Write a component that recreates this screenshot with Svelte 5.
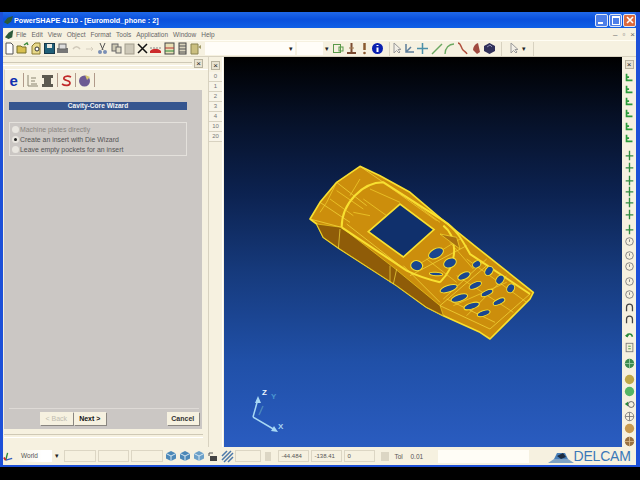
<script>
  const menus = ["File", "Edit", "View", "Object", "Format", "Tools", "Application", "Window", "Help"];
  const layers = ["0", "1", "2", "3", "4", "10", "20"];
  const toolsA = ["page", "open", "find", "save", "print", "undo", "redo", "cut", "copy", "paste", "x", "red", "grid", "list", "note"];
  const toolsB = ["frame", "anchor", "bang", "info"];
  const toolsC = ["arrow", "axes", "plus", "line", "arc", "curve", "solid", "cube"];
  const side = [
    ["corner", 0], ["corner", 0], ["corner", 0], ["corner", 0], ["corner", 2], ["corner", 0],
    ["cross", 5], ["cross", 0], ["cross", 1], ["cross", 0], ["cross", -1], ["cross", 0], ["cross", 3], ["circle", 1],
    ["circle", 2], ["circle", -1],
    ["circle", 3], ["circle", 2], ["cup", 1], ["cup", 0],
    ["back", 4], ["sheet", 1],
    ["globe", 4], ["gold", 4], ["lime", 0], ["hand", 1], ["wire", 1], ["copper", 0], ["bronze", 1]
  ];
  const keys = [
    [408, 283, 24, 14, -28], [350, 320, 18, 15, 10], [450, 312, 20, 14, -25], [408, 345, 20, 5, 5],
    [530, 316, 13, 10, -30], [567, 336, 15, 11, -55], [600, 362, 15, 11, -55], [632, 388, 14, 11, -60],
    [492, 351, 20, 10, -25], [526, 379, 20, 9, -25], [561, 402, 19, 8, -25], [597, 428, 19, 8, -25],
    [446, 389, 27, 10, -18], [478, 417, 26, 10, -18], [515, 441, 24, 9, -18], [551, 463, 20, 8, -18]
  ];
</script>

{#snippet icon(name)}
  <svg class="ico" viewBox="0 0 13 13">
    {#if name === "page"}
      <path d="M3 1h5l2 2v9H3z" fill="#fff" stroke="#555" />
    {:else if name === "open"}
      <path d="M1 11V4h4l1 1h4v6z" fill="#d8c050" stroke="#77702a" /><path d="M8 3l3-2 1 2" fill="none" stroke="#3a8a3a" stroke-width="1.5" />
    {:else if name === "find"}
      <path d="M2 12V4l3-3h5v11z" fill="#e8d98a" stroke="#8a7a30" /><circle cx="7" cy="7" r="2" fill="#fff" stroke="#333" />
    {:else if name === "save"}
      <rect x="1.5" y="1.5" width="10" height="10" fill="#1f5f78" stroke="#16384a" /><rect x="4" y="2" width="5" height="4" fill="#e8e8e0" />
    {:else if name === "print"}
      <rect x="1" y="6" width="11" height="5" fill="#777" /><rect x="3" y="2" width="7" height="5" fill="#ddd" stroke="#666" />
    {:else if name === "undo"}
      <path d="M3 7c2-3 5-3 7 0" fill="none" stroke="#cfc8b8" stroke-width="1.5" />
    {:else if name === "redo"}
      <path d="M3 7h7M8 5l2 2-2 2" fill="none" stroke="#d5cebe" />
    {:else if name === "cut"}
      <path d="M4 1l3 7M9 1L6 8" stroke="#555" fill="none" /><circle cx="4" cy="10" r="2" fill="#7a8fb5" /><circle cx="9" cy="10" r="2" fill="#7a8fb5" />
    {:else if name === "copy"}
      <rect x="2" y="2" width="6" height="7" fill="#cfcab5" stroke="#666" /><rect x="6" y="5" width="5" height="6" fill="#e4dfca" stroke="#666" />
    {:else if name === "paste"}
      <rect x="2" y="2" width="9" height="10" fill="#cdc8b8" stroke="#a29d8c" />
    {:else if name === "x"}
      <path d="M2 2l9 9M11 2l-9 9" stroke="#111" stroke-width="1.5" />
    {:else if name === "red"}
      <path d="M1 9c3-3 8-3 11 0v2H1z" fill="#cc2c2c" /><path d="M1 6h11" stroke="#888" stroke-dasharray="2 1" />
    {:else if name === "grid"}
      <rect x="2" y="1" width="9" height="11" fill="#e8dfb5" stroke="#444" /><path d="M2 6h9" stroke="#b33" /><path d="M2 9h9" stroke="#2a8a3a" />
    {:else if name === "list"}
      <rect x="3" y="1" width="7" height="11" fill="#d8d2bc" stroke="#444" /><path d="M3 4h7M3 7h7M3 10h7" stroke="#555" />
    {:else if name === "note"}
      <path d="M2 2h7v10H2z" fill="#cbbf80" stroke="#8a8350" /><path d="M9 5l3-2v4z" fill="#a09a68" />
    {:else if name === "frame"}
      <rect x="1.5" y="2.5" width="7" height="8" fill="none" stroke="#5a9a4a" /><rect x="7" y="5" width="4" height="4" fill="none" stroke="#5a9a4a" />
    {:else if name === "anchor"}
      <path d="M6.5 1v9M2 11h9" stroke="#7a4a30" stroke-width="2" fill="none" /><path d="M4 6h5" stroke="#a07a50" />
    {:else if name === "bang"}
      <path d="M6.5 1v7" stroke="#8a5a30" stroke-width="2.5" /><circle cx="6.5" cy="11" r="1.3" fill="#8a5a30" />
    {:else if name === "info"}
      <circle cx="6.5" cy="6.5" r="5.5" fill="#0a20b0" /><path d="M6.5 3v1M6.5 5.5V10" stroke="#fff" stroke-width="2" />
    {:else if name === "arrow"}
      <path d="M4 1v10l2.5-2.5L9 11l1-1-2-2.5h3z" fill="#f2efe6" stroke="#9a9a9a" />
    {:else if name === "axes"}
      <path d="M3 2v8h8M3 10l5-5" stroke="#5c7c98" stroke-width="1.5" fill="none" />
    {:else if name === "plus"}
      <path d="M6.5 1v11M1 6.5h11" stroke="#4a90a8" stroke-width="1.5" />
    {:else if name === "line"}
      <path d="M2 12L12 2" stroke="#6aa860" stroke-width="1.5" />
    {:else if name === "arc"}
      <path d="M2 12C2 6 6 2 11 2" stroke="#6aa860" stroke-width="1.3" fill="none" />
    {:else if name === "curve"}
      <path d="M2 1c3 0 3 5 5 7s3 2 4 4" stroke="#b0503c" stroke-width="1.5" fill="none" />
    {:else if name === "solid"}
      <path d="M3 8c0-3 2-6 5-7l2 9-3 2z" fill="#a04a40" />
    {:else if name === "cube"}
      <path d="M6.5 1L12 4v5l-5.5 3L1 9V4z" fill="#30305a" /><path d="M4 5l3-2 2 2" stroke="#8a8ab0" fill="none" />
    {:else if name === "corner"}
      <path d="M3 2v8h7M3 6h3" stroke="#2a9a3a" stroke-width="2" fill="none" />
    {:else if name === "cross"}
      <path d="M6.5 1v11M2 7h9" stroke="#2f8a40" stroke-width="1.6" />
    {:else if name === "circle"}
      <circle cx="6.5" cy="6.5" r="4.5" fill="none" stroke="#777" /><path d="M6.5 4v3" stroke="#777" />
    {:else if name === "cup"}
      <path d="M3 11V6a3.5 3.5 0 0 1 7 0v5" fill="none" stroke="#444" stroke-width="1.5" />
    {:else if name === "back"}
      <path d="M3 8c0-4 6-5 7 0" fill="none" stroke="#2a8a3a" stroke-width="1.8" /><path d="M1 6l3 3 2-3z" fill="#2a8a3a" />
    {:else if name === "sheet"}
      <rect x="2.5" y="1.5" width="8" height="10" fill="#f2efd8" stroke="#777" /><path d="M5 5h3M5 8h3" stroke="#3a8a3a" />
    {:else if name === "globe"}
      <circle cx="6.5" cy="6.5" r="5.5" fill="#3c8a50" /><path d="M1 6.5h11M6.5 1v11" stroke="#a0d0a8" />
    {:else if name === "gold"}
      <circle cx="6.5" cy="6.5" r="5.5" fill="#c0a848" />
    {:else if name === "lime"}
      <circle cx="6.5" cy="6.5" r="5.5" fill="#55b565" />
    {:else if name === "hand"}
      <path d="M1 6l4-3v6z" fill="#2a8a3a" /><circle cx="8.5" cy="6.5" r="3.5" fill="#f4f0e0" stroke="#555" />
    {:else if name === "wire"}
      <circle cx="6.5" cy="6.5" r="5" fill="none" stroke="#777" /><path d="M1.5 6.5h10M6.5 1.5v10" stroke="#777" />
    {:else if name === "copper"}
      <circle cx="6.5" cy="6.5" r="5.5" fill="#c89a50" />
    {:else if name === "bronze"}
      <circle cx="6.5" cy="6.5" r="5.5" fill="#987040" /><path d="M1 6.5h11M6.5 1v11" stroke="#d8b888" />
    {/if}
  </svg>
{/snippet}

<div class="window">
  <div class="title">
    <svg class="logo" viewBox="0 0 12 12"><path d="M1 8l4-5 6-2-2 6-4 3z" fill="#2c5a3a" /></svg>
    <span class="caption">PowerSHAPE 4110 - [Euromold_phone : 2]</span>
    <div class="caps">
      <span class="cap"><i class="min"></i></span>
      <span class="cap"><i class="max"></i></span>
      <span class="cap close"><svg viewBox="0 0 10 10"><path d="M2 2l6 6M8 2l-6 6" stroke="#fff" stroke-width="1.6" /></svg></span>
    </div>
  </div>

  <div class="menu">
    <svg class="logo" viewBox="0 0 12 12"><path d="M1 9l4-5 5-3-1 8-4 2z" fill="#2c5a3a" /></svg>
    {#each menus as m}<span>{m}</span>{/each}
    <div class="mdi">
      <span>–</span><span>▫</span><span>×</span>
    </div>
  </div>

  <div class="toolbar">
    <div class="tools">
      {#each toolsA as t}<span class="tool">{@render icon(t)}</span>{/each}
    </div>
    <div class="combo wide"><span class="drop">▾</span></div>
    <div class="combo small"></div>
    <span class="drop">▾</span>
    <div class="tools">
      {#each toolsB as t}<span class="tool">{@render icon(t)}</span>{/each}
    </div>
    <i class="groove first"></i>
    <div class="tools">
      {#each toolsC as t}<span class="tool">{@render icon(t)}</span>{/each}
    </div>
    <i class="groove"></i>
    <span class="tool">{@render icon("arrow")}</span>
    <span class="drop">▾</span>
    <i class="groove"></i>
  </div>

  <div class="main">
    <div class="left">
      <div class="lefthead"><i class="rule"></i><span class="xbtn">×</span></div>
      <div class="tabs">
        <span class="tab ie">e</span><i class="tabsep"></i>
        <span class="tab"><svg viewBox="0 0 13 13"><path d="M2 1v11h10M5 4h5M5 7h4M5 10h6" stroke="#8a8570" fill="none" /></svg></span>
        <span class="tab"><svg viewBox="0 0 13 13"><path d="M1 1h11v3H10v6h2v3H1v-3h2V4H1z" fill="#5c5a50" /></svg></span><i class="tabsep"></i>
        <span class="tab"><svg viewBox="0 0 13 13"><path d="M11 3C7 1 3 3 4 5s6 1 6 4-5 3-8 1" fill="none" stroke="#c02a2a" stroke-width="1.7" /></svg></span><i class="tabsep"></i>
        <span class="tab"><svg viewBox="0 0 13 13"><circle cx="6.5" cy="7" r="5.5" fill="#6c5a94" /><path d="M7 1l5 2-3 3z" fill="#d8c870" /></svg></span><i class="tabsep"></i>
      </div>
      <div class="panel">
        <h1>Cavity-Core Wizard</h1>
        <div class="options">
          <label class="dim"><i class="radio"></i>Machine plates directly</label>
          <label><i class="radio on"></i>Create an insert with Die Wizard</label>
          <label><i class="radio"></i>Leave empty pockets for an insert</label>
        </div>
        <div class="spacer"></div>
        <div class="actions">
          <button class="off">&lt; Back</button>
          <button>Next &gt;</button>
          <button class="cancel">Cancel</button>
        </div>
      </div>
      <div class="leftfoot"><i class="rule"></i></div>
    </div>

    <div class="layers">
      <span class="xbtn">×</span>
      {#each layers as l}<span class="layer">{l}</span>{/each}
    </div>

    <div class="view">
      <svg class="phone" viewBox="0 0 720 570">
        <path d="M30 180L60 130 110 70 180 22 240 50 330 100 430 185 530 265 700 400 690 420 570 540 540 520 430 470 380 445 290 380 120 270 70 235 50 195z" fill="#cc8e0c" stroke="#f8e030" stroke-width="5" stroke-linejoin="round" />
        <path d="M50 195L125 205 280 325 420 440 430 470 380 445 290 380 120 270 70 235z" fill="#8f5c08" stroke="#f0d020" stroke-width="2" />
        <path d="M125 205C125 130 190 70 250 70L430 185C470 210 490 250 510 285L690 405M125 205L320 335C360 355 400 365 420 370M430 200C470 230 480 310 420 370" fill="none" stroke="#f8e030" stroke-width="6" />
        <path d="M60 130L150 190M110 70L200 140M180 22L250 70M120 210L115 270M270 320L270 370M290 330L280 375M570 510L690 405M330 350L500 260M560 300L430 420M620 350L500 470M420 440L560 320M30 180L125 205M420 440L570 510M440 420L585 490M310 320L420 430M140 195L300 320" fill="none" stroke="#f8e040" stroke-width="2" />
        <path d="M110 95L190 150M90 120L160 170M210 90L300 130M160 160L210 170M190 120L260 170M350 320L480 240M380 300L470 370M450 250L520 330M300 100L420 190M270 85L410 185M500 300L680 430M470 350L640 460M460 440L620 370" fill="none" stroke="#f4d430" stroke-width="2" />
        <path d="M110 70L80 130 60 160M180 60L150 110" fill="none" stroke="#f4d430" stroke-width="2" />
        <path d="M205 218L300 135 402 212 310 294z" fill="#10306c" stroke="#f8e030" stroke-width="5" />
        <path d="M420 225L470 235 480 270 440 240z" fill="#a87010" stroke="#f8e030" stroke-width="2" />
        {#each keys as [cx, cy, rx, ry, a]}
          <ellipse {cx} {cy} {rx} {ry} transform="rotate({a} {cx} {cy})" fill="#1a4690" stroke="#f8e030" stroke-width="3" />
        {/each}
      </svg>
      <svg class="axes" viewBox="0 0 50 50">
        <path d="M4 30L9 12M4 30L26 43" stroke="#a8d8f4" stroke-width="1.5" fill="none" />
        <path d="M9 9l-3 7h6zM29 45l-7-1 3-5z" fill="#a8d8f4" />
        <path d="M10 28L14 19" stroke="#4a86bc" stroke-width="1.5" />
        <text x="13" y="8" class="az">Z</text><text x="22" y="12" class="ay">Y</text><text x="29" y="42" class="ax">X</text>
      </svg>
    </div>

    <div class="right">
      <span class="xbtn">×</span>
      {#each side as [name, gap]}
        <span class="sidetool" style="margin-top:{gap}px">{@render icon(name)}</span>
      {/each}
    </div>
  </div>

  <div class="status">
    <svg class="axis" viewBox="0 0 12 12"><path d="M3 10L5 2" stroke="#2a8a3a" stroke-width="1.5" /><path d="M3 10l7-2" stroke="#3060c0" stroke-width="1.5" /><path d="M3 10l-2-3" stroke="#c02a2a" stroke-width="2" /></svg>
    <div class="world">World</div>
    <span class="drop">▾</span>
    <div class="inputs">
      <i class="field f1"></i><i class="field f1"></i><i class="field f1"></i>
    </div>
    <div class="cubes">
      {#each ["#4c88b8", "#4c88b8", "#6ca0c8"] as c}
        <svg viewBox="0 0 12 12"><path d="M6 1l5 2.5v5L6 11 1 8.5v-5z" fill={c} /><path d="M1 3.5L6 6l5-2.5M6 6v5" stroke="#d8e8f0" fill="none" /></svg>
      {/each}
      <svg viewBox="0 0 12 12"><rect x="3" y="6" width="7" height="5" fill="#444" /><path d="M2 6V3h4" stroke="#555" fill="none" /></svg>
    </div>
    <svg class="hatch" viewBox="0 0 13 13"><path d="M1 6l5-5M1 10l9-9M3 12l9-9M7 12l5-5" stroke="#4c78a8" stroke-width="1.5" /></svg>
    <i class="field f2"></i>
    <i class="lockbox"></i>
    <div class="readouts">
      <span class="field val">-44.484</span>
      <span class="field val">-138.41</span>
      <span class="field val">0</span>
    </div>
    <i class="lockbox two"></i>
    <span class="tol">Tol</span>
    <span class="tol val2">0.01</span>
    <i class="blank"></i>
    <div class="delcam">
      <svg viewBox="0 0 26 13"><path d="M0 12L6 8 9 2h8l3 6 6 4z" fill="#4a80b8" /><path d="M9 5l6-3 3 4-5 2z" fill="#1c2c40" /><path d="M0 9h26M0 11h26" stroke="#f8f4e4" stroke-width=".6" /></svg>
      <span>DELCAM</span>
    </div>
  </div>
</div>

<style>
  :global(body) {
    margin: 0;
    background: #000;
  }
  .window {
    width: 640px;
    height: 455px;
    margin-top: 12px;
    box-sizing: border-box;
    display: flex;
    flex-direction: column;
    background: #f6f1e0;
    border: solid #1d50d8;
    border-width: 0 4px 2px 3px;
    font-family: "Liberation Sans", sans-serif;
    overflow: hidden;
  }
  .title {
    flex: 0 0 16px;
    margin: 0 -4px 0 -3px;
    padding: 0 4px 0 3px;
    display: flex;
    align-items: center;
    background: linear-gradient(#1f68e8, #0a50dc 45%, #1060e6);
    color: #fff;
    font-size: 7.2px;
    font-weight: bold;
  }
  .logo {
    width: 11px;
    height: 11px;
    margin-right: 0;
  }
  .caption {
    white-space: nowrap;
  }
  .caps {
    margin-left: auto;
    display: flex;
    gap: 1px;
  }
  .cap {
    width: 11px;
    height: 11px;
    border: 1px solid #dfe8f8;
    border-radius: 2px;
    background: #4d7fe8;
    display: flex;
    align-items: center;
    justify-content: center;
  }
  .cap.close {
    background: #dc6a3e;
  }
  .cap svg {
    width: 10px;
    height: 10px;
  }
  .min {
    width: 5px;
    height: 2px;
    background: #fff;
    margin-top: 6px;
    margin-right: 2px;
  }
  .max {
    width: 6px;
    height: 6px;
    border: 1px solid #fff;
    border-top-width: 2px;
  }
  .menu {
    flex: 0 0 12px;
    display: flex;
    align-items: center;
    gap: 5px;
    font-size: 6.5px;
    color: #666;
    padding-right: 1px;
  }
  .menu .logo {
    margin-right: -4px;
    margin-left: 1px;
  }
  .mdi {
    margin-left: auto;
    display: flex;
    gap: 5px;
    font-size: 8px;
    color: #666;
  }
  .toolbar {
    flex: 0 0 17px;
    display: flex;
    align-items: center;
    border-top: 1px solid #fffdf4;
    border-bottom: 1px solid #d8d2c0;
    box-sizing: border-box;
  }
  .tools {
    display: flex;
  }
  .tool {
    width: 13.3px;
    height: 13px;
    display: flex;
    justify-content: center;
  }
  .ico {
    width: 13px;
    height: 13px;
  }
  .combo {
    height: 13px;
    background: #fffdf8;
  }
  .wide {
    width: 90px;
    margin-left: 3px;
    display: flex;
    justify-content: flex-end;
    line-height: 13px;
  }
  .small {
    width: 26px;
    margin-left: 2px;
  }
  .drop {
    font-size: 7px;
    color: #222;
    width: 8px;
    text-align: center;
  }
  .groove {
    width: 1px;
    height: 14px;
    background: #d8d2c0;
    margin: 0 5px;
  }
  .groove.first {
    margin: 0 0 0 4px;
  }
  .main {
    flex: 0 0 390px;
    display: flex;
    min-height: 0;
  }
  .left {
    width: 205px;
    display: flex;
    flex-direction: column;
    padding-top: 1px;
  }
  .lefthead {
    height: 11px;
    display: flex;
    align-items: center;
    gap: 2px;
    padding-right: 5px;
  }
  .rule {
    flex: 1;
    height: 2px;
    border-top: 1px solid #cfc9b6;
    border-bottom: 1px solid #fff;
  }
  .xbtn {
    width: 7px;
    height: 7px;
    font-size: 8px;
    line-height: 7px;
    text-align: center;
    color: #222;
    border: 1px solid #b8b29e;
    background: #e8e2d0;
    flex: none;
  }
  .tabs {
    height: 20px;
    margin-left: 1px;
    display: flex;
    align-items: center;
    padding-left: 2px;
    gap: 2px;
    border-top: 1px solid #fff;
    border-left: 1px solid #d8d2c0;
  }
  .tab {
    width: 13.5px;
    height: 13px;
    display: flex;
    align-items: center;
    justify-content: center;
  }
  .tab svg {
    width: 13px;
    height: 13px;
  }
  .ie {
    color: #1030b0;
    font: bold 15px "Liberation Sans", sans-serif;
  }
  .tabsep {
    width: 1px;
    height: 14px;
    background: #b09a8a;
  }
  .panel {
    width: 198px;
    flex: 0 0 339px;
    margin-left: 1px;
    box-sizing: border-box;
    background: #cbc7c4;
    display: flex;
    flex-direction: column;
    padding: 12px 15px 0 5px;
    position: relative;
  }
  h1 {
    margin: 0;
    height: 8px;
    background: #35558f;
    color: #f4f4f4;
    font-size: 6.6px;
    line-height: 8px;
    text-align: center;
    font-weight: bold;
  }
  .options {
    margin-top: 12px;
    height: 34px;
    box-sizing: border-box;
    border: 1px solid #e4e1dc;
    display: flex;
    flex-direction: column;
    justify-content: space-between;
    padding: 1px 0 1px 2px;
    color: #555;
    font-size: 6.9px;
  }
  label {
    display: flex;
    align-items: center;
    gap: 1px;
    height: 10px;
  }
  .dim {
    color: #8a8682;
  }
  .radio {
    width: 7px;
    height: 7px;
    border-radius: 50%;
    background: #e9e6e0;
    display: flex;
    align-items: center;
    justify-content: center;
  }
  .on::after {
    content: "";
    width: 3px;
    height: 3px;
    border-radius: 50%;
    background: #222;
  }
  .spacer {
    flex: 1;
  }
  .actions {
    margin-right: -12px;
    padding: 3px 0 0 31px;
    height: 21px;
    box-sizing: border-box;
    border-top: 1px solid #dedad6;
    display: flex;
    gap: 1px;
  }
  button {
    width: 32.5px;
    height: 13px;
    padding: 0;
    border: 0;
    background: #f6f1e0;
    box-shadow: 1px 1px 0 #8a8680;
    color: #111;
    font: bold 7px "Liberation Sans", sans-serif;
  }
  .off {
    color: #c0bcb0;
    font-weight: normal;
  }
  .cancel {
    margin-left: auto;
    font-weight: bold;
    color: #333;
  }
  .leftfoot {
    margin: 5px 5px 0 1px;
    display: flex;
  }
  .layers {
    width: 13px;
    padding-top: 4px;
    display: flex;
    flex-direction: column;
    align-items: center;
    border-left: 1px solid #d8d2c0;
    border-right: 1px solid #fff;
  }
  .layers .xbtn {
    margin-bottom: 2px;
  }
  .layer {
    width: 13px;
    height: 9px;
    border: 1px solid #d8d2c0;
    border-width: 0 0 1px;
    font-size: 6px;
    line-height: 9px;
    text-align: center;
    color: #777;
    background: #f8f4e8;
  }
  .view {
    width: 398px;
    margin-left: 1px;
    position: relative;
    background: linear-gradient(#000 0, #061026 15%, #0c2250 35%, #163a7c 55%, #2050a8 78%, #2a5cc0 100%);
  }
  .phone {
    position: absolute;
    left: 76px;
    top: 102px;
    width: 240px;
    height: 190px;
  }
  .axes {
    position: absolute;
    left: 25px;
    top: 330px;
    width: 50px;
    height: 50px;
  }
  .az,
  .ay,
  .ax {
    font: bold 8px "Liberation Sans", sans-serif;
  }
  .az {
    fill: #eef6ff;
  }
  .ay {
    fill: #4a96d0;
  }
  .ax {
    fill: #a8d4f0;
  }
  .right {
    flex: 1;
    display: flex;
    flex-direction: column;
    align-items: center;
    padding-top: 3px;
  }
  .right .xbtn {
    margin-bottom: 3px;
  }
  .sidetool {
    height: 12.2px;
    display: flex;
    align-items: center;
  }
  .sidetool .ico {
    width: 11px;
    height: 11px;
  }
  .status {
    flex: 0 0 18px;
    display: flex;
    align-items: center;
    font-size: 6.5px;
    color: #555;
  }
  .axis {
    width: 11px;
    height: 11px;
    margin-left: 0;
  }
  .world {
    width: 34px;
    height: 12px;
    margin-left: 4px;
    padding-left: 3px;
    box-sizing: border-box;
    line-height: 12px;
    background: linear-gradient(90deg, #f6f1e0, #fff 70%);
    font-size: 6.5px;
  }
  .status .drop {
    margin-left: 1px;
    margin-right: 3px;
    width: 8px;
  }
  .inputs,
  .readouts {
    display: flex;
    gap: 2px;
  }
  .field {
    height: 12px;
    box-sizing: border-box;
    border: 1px solid #dcd6c4;
    display: block;
  }
  .f1 {
    width: 31.5px;
  }
  .f2 {
    width: 26px;
    margin-left: 1px;
  }
  .cubes {
    display: flex;
    gap: 2px;
    margin-left: 2px;
  }
  .cubes svg {
    width: 12px;
    height: 12px;
  }
  .hatch {
    width: 13px;
    height: 13px;
    margin: 0 0 0 2px;
  }
  .lockbox {
    width: 6px;
    height: 9px;
    margin: 0 7px 0 4px;
    background: #dcd6c4;
  }
  .val {
    width: 31px;
    padding-left: 3px;
    line-height: 10px;
    font-size: 6px;
  }
  .lockbox.two {
    width: 8px;
    margin: 0 3px 0 6px;
  }
  .tol {
    margin-left: 3px;
    width: 13px;
  }
  .val2 {
    margin-left: 3px;
  }
  .blank {
    width: 91px;
    height: 13px;
    margin-left: 14px;
    background: #fffdf6;
  }
  .delcam {
    display: flex;
    align-items: flex-end;
    margin-left: 19px;
    color: #3a78b8;
    font-size: 14px;
    letter-spacing: -0.2px;
    flex: none;
  }
  .delcam svg {
    width: 26px;
    height: 13px;
  }
</style>
